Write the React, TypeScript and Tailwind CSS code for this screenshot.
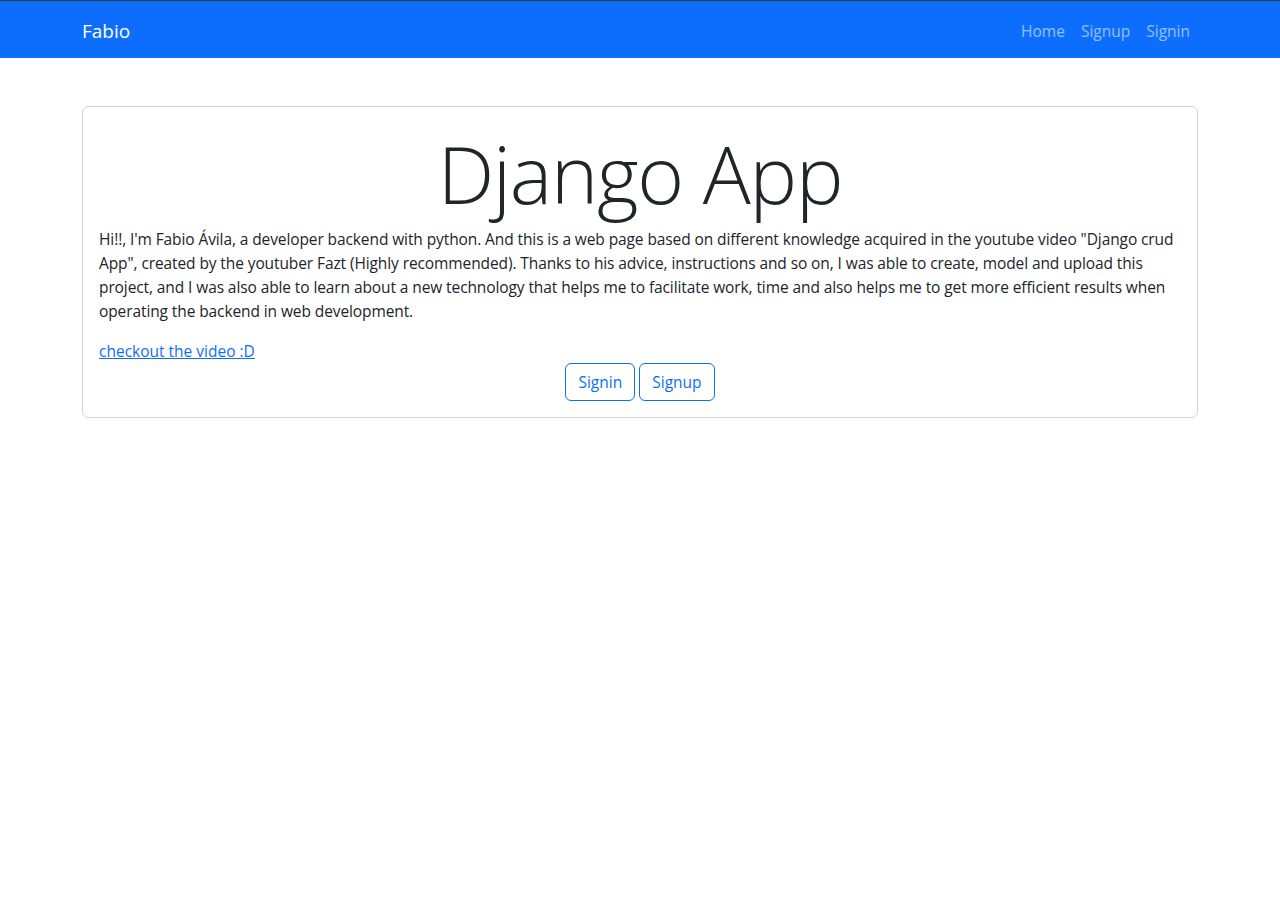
import React from "react";

const font = { fontFamily: '"Open Sans", "Noto Sans", sans-serif' };

export default function App() {
  return (
    <div className="min-h-[913px] bg-white text-[#212529] text-[16px] leading-6" style={font}>
      <div className="h-px bg-[#3a3a3a]" />
      <nav className="bg-[#0d6efd] pt-[10px] pb-[7px]">
        <div className="mx-auto w-[1140px] px-3 flex items-center justify-between">
          <a className="text-white text-[19px] leading-[30px] py-[5px] no-underline" href="#">Fabio</a>
          <div className="flex">
            <a className="px-2 py-2 text-white/55 leading-6 text-[15.5px]" href="#">Home</a>
            <a className="px-2 py-2 text-white/55 leading-6 text-[15.5px]" href="#">Signup</a>
            <a className="px-2 py-2 text-white/55 leading-6 text-[15.5px]" href="#">Signin</a>
          </div>
        </div>
      </nav>
      <main className="mx-auto w-[1140px] px-3 mt-12">
        <div className="border border-[#d4d4d4] rounded-md p-4">
          <h1 className="text-center text-[80px] leading-[96px] font-light mb-2 tracking-[-1.2px]">
            <span className="relative top-[2px]">Django App</span>
          </h1>
          <p className="mb-4 text-[15.5px] tracking-[-0.1px]">
            Hi!!, I'm Fabio Ávila, a developer backend with python. And this is a web page based on different knowledge acquired in the youtube video "Django crud
            <br />
            App", created by the youtuber Fazt (Highly recommended). Thanks to his advice, instructions and so on, I was able to create, model and upload this
            <br />
            project, and I was also able to learn about a new technology that helps me to facilitate work, time and also helps me to get more efficient results when
            <br />
            operating the backend in web development.
          </p>
          <a href="#" className="text-[#0d6efd] underline text-[15.5px]">checkout the video :D</a>
          <div className="flex justify-center gap-1">
            <button className="border border-[#0d6efd] text-[#0d6efd] rounded-md px-3 py-1.5 leading-6 text-[15.5px]">Signin</button>
            <button className="border border-[#0d6efd] text-[#0d6efd] rounded-md px-3 py-1.5 leading-6 text-[15.5px]">Signup</button>
          </div>
        </div>
      </main>
    </div>
  );
}
